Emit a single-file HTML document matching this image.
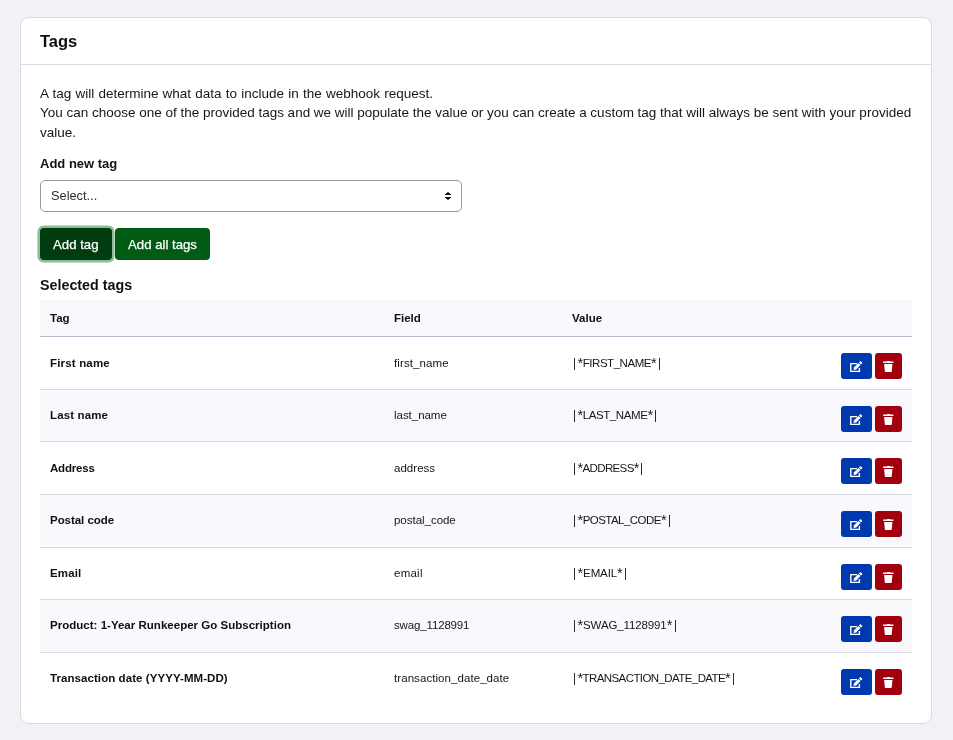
<!DOCTYPE html>
<html>
<head>
<meta charset="utf-8">
<style>
html,body{margin:0;padding:0;}
body{width:953px;height:740px;background:#f1f1f6;font-family:"Liberation Sans",sans-serif;color:#111;position:relative;overflow:hidden;}
.card{will-change:transform;position:absolute;left:20px;top:17px;width:910px;height:705px;background:#fff;border:1px solid #d9d9e3;border-radius:9px;}
.abs{position:absolute;white-space:nowrap;line-height:1;}
.hdiv{position:absolute;left:0;right:0;top:46px;height:1px;background:#d9d9e3;}
.title{left:19px;top:15px;font-size:16.5px;font-weight:bold;color:#0d0d0d;}
.p{left:19px;font-size:13.5px;color:#161616;}
.lbl{left:19px;font-size:13px;font-weight:bold;color:#111;}
.select{position:absolute;left:19px;top:162px;width:420px;height:30px;border:1px solid #9696a3;border-radius:5px;background:#fff;}
.select .t{position:absolute;left:10px;top:9px;font-size:12.8px;line-height:1;color:#2e2e2e;}
.btn{position:absolute;top:210px;height:32px;border-radius:4px;color:#fff;font-size:13.2px;}
.btn .t{position:absolute;top:10px;line-height:1;white-space:nowrap;-webkit-text-stroke:0.25px #fff;}
.b1{left:19px;width:72px;background:#003c10;box-shadow:0 0 0 2.6px #8dbd97;}
.b2{left:94px;width:95px;background:#005c14;}
.table{position:absolute;left:19px;top:282px;width:872px;}
.thead{position:absolute;left:0;top:0;width:872px;height:36px;background:#f9f9fd;border-bottom:1px solid #b9b9cb;}
.row{position:absolute;left:0;width:872px;}
.row.even{background:#f9f9fd;}
.row .bd{position:absolute;left:0;right:0;bottom:0;height:1px;background:#d9d9e3;}
.th{position:absolute;top:13px;font-size:11.5px;font-weight:bold;line-height:1;color:#0f0f0f;}
.td{position:absolute;font-size:11.5px;line-height:1;white-space:nowrap;color:#161616;}
.td.b{font-weight:bold;color:#0f0f0f;}
.pl,.pr{display:inline-block;width:1px;height:12px;background:#2a2a2a;vertical-align:-3px;letter-spacing:0;}
.pl{margin-left:2px;margin-right:2.5px;}
.pr{margin-left:2.5px;}
.st{font-size:14.5px;line-height:0;vertical-align:-0.5px;}
.ib{position:absolute;height:26px;border-radius:3px;}
.ib svg{position:absolute;}
.edit{background:#0038b0;width:31px;}
.del{background:#a3000f;width:27px;}
</style>
</head>
<body>
<div class="card">
  <div class="abs title">Tags</div>
  <div class="hdiv"></div>
  <div class="abs p" style="top:69px;word-spacing:0.45px">A tag will determine what data to include in the webhook request.</div>
  <div class="abs p" style="top:87.5px;word-spacing:-0.04px">You can choose one of the provided tags and we will populate the value or you can create a custom tag that will always be sent with your provided</div>
  <div class="abs p" style="top:108px">value.</div>
  <div class="abs lbl" style="top:139px">Add new tag</div>
  <div class="select"><div class="t">Select...</div>
    <svg style="position:absolute;left:403px;top:9px" width="8" height="12" viewBox="0 0 8 12"><path d="M4 1.9 L7 4.5 V5 H1 V4.5 Z M1 7 H7 V7.5 L4 10.1 L1 7.5 Z" fill="#111"/></svg>
  </div>
  <div class="btn b1"><span class="t" style="left:13px">Add tag</span></div>
  <div class="btn b2"><span class="t" style="left:13px">Add all tags</span></div>
  <div class="abs lbl" style="top:260px;font-size:14.3px">Selected tags</div>
  <div class="table">
    <div class="thead">
      <div class="th" style="left:10px">Tag</div>
      <div class="th" style="left:354px">Field</div>
      <div class="th" style="left:532px">Value</div>
    </div>
    <div class="row" style="top:37px;height:53px"><div class="bd"></div><div class="td b" style="left:10px;top:21px;letter-spacing:0.174px">First name</div><div class="td" style="left:354px;top:21px;letter-spacing:0.102px">first_name</div><div class="td" style="left:532px;top:21px;letter-spacing:-0.450px"><span class="pl"></span><span class="st">*</span>FIRST_NAME<span class="st">*</span><span class="pr"></span></div><div class="ib edit" style="left:801px;top:16px"><svg style="left:0;top:0" width="31" height="26" viewBox="0 0 31 26"><path d="M16 10.6 H9.8 V18.4 H18.4 V15" fill="none" stroke="#fff" stroke-width="1.4"/><path d="M12.45 17.05 L13.09 14.29 L17.40 9.98 L19.52 12.10 L15.21 16.41 Z" fill="#fff"/><path d="M17.93 9.52 L19.41 8.03 L21.47 10.09 L19.98 11.57 Z" fill="#fff"/></svg></div><div class="ib del" style="left:835px;top:16px"><svg style="left:0;top:0" width="27" height="26" viewBox="0 0 27 26"><path d="M8.2 8.6 H11.8 L12.3 8 H14.8 L15.3 8.6 H18.4 V10.1 H8.2 Z" fill="#fff"/><path d="M9.1 11 H17.4 L16.8 18.3 Q16.7 19.0 15.9 19.0 H10.7 Q9.9 19.0 9.8 18.3 Z" fill="#fff"/></svg></div></div>
    <div class="row even" style="top:90px;height:52px"><div class="bd"></div><div class="td b" style="left:10px;top:20px;letter-spacing:0.142px">Last name</div><div class="td" style="left:354px;top:20px;letter-spacing:-0.031px">last_name</div><div class="td" style="left:532px;top:20px;letter-spacing:-0.412px"><span class="pl"></span><span class="st">*</span>LAST_NAME<span class="st">*</span><span class="pr"></span></div><div class="ib edit" style="left:801px;top:16px"><svg style="left:0;top:0" width="31" height="26" viewBox="0 0 31 26"><path d="M16 10.6 H9.8 V18.4 H18.4 V15" fill="none" stroke="#fff" stroke-width="1.4"/><path d="M12.45 17.05 L13.09 14.29 L17.40 9.98 L19.52 12.10 L15.21 16.41 Z" fill="#fff"/><path d="M17.93 9.52 L19.41 8.03 L21.47 10.09 L19.98 11.57 Z" fill="#fff"/></svg></div><div class="ib del" style="left:835px;top:16px"><svg style="left:0;top:0" width="27" height="26" viewBox="0 0 27 26"><path d="M8.2 8.6 H11.8 L12.3 8 H14.8 L15.3 8.6 H18.4 V10.1 H8.2 Z" fill="#fff"/><path d="M9.1 11 H17.4 L16.8 18.3 Q16.7 19.0 15.9 19.0 H10.7 Q9.9 19.0 9.8 18.3 Z" fill="#fff"/></svg></div></div>
    <div class="row" style="top:142px;height:53px"><div class="bd"></div><div class="td b" style="left:10px;top:21px;letter-spacing:-0.183px">Address</div><div class="td" style="left:354px;top:21px;letter-spacing:0.029px">address</div><div class="td" style="left:532px;top:21px;letter-spacing:-0.632px"><span class="pl"></span><span class="st">*</span>ADDRESS<span class="st">*</span><span class="pr"></span></div><div class="ib edit" style="left:801px;top:16px"><svg style="left:0;top:0" width="31" height="26" viewBox="0 0 31 26"><path d="M16 10.6 H9.8 V18.4 H18.4 V15" fill="none" stroke="#fff" stroke-width="1.4"/><path d="M12.45 17.05 L13.09 14.29 L17.40 9.98 L19.52 12.10 L15.21 16.41 Z" fill="#fff"/><path d="M17.93 9.52 L19.41 8.03 L21.47 10.09 L19.98 11.57 Z" fill="#fff"/></svg></div><div class="ib del" style="left:835px;top:16px"><svg style="left:0;top:0" width="27" height="26" viewBox="0 0 27 26"><path d="M8.2 8.6 H11.8 L12.3 8 H14.8 L15.3 8.6 H18.4 V10.1 H8.2 Z" fill="#fff"/><path d="M9.1 11 H17.4 L16.8 18.3 Q16.7 19.0 15.9 19.0 H10.7 Q9.9 19.0 9.8 18.3 Z" fill="#fff"/></svg></div></div>
    <div class="row even" style="top:195px;height:53px"><div class="bd"></div><div class="td b" style="left:10px;top:20px;letter-spacing:-0.045px">Postal code</div><div class="td" style="left:354px;top:20px;letter-spacing:-0.025px">postal_code</div><div class="td" style="left:532px;top:20px;letter-spacing:-0.530px"><span class="pl"></span><span class="st">*</span>POSTAL_CODE<span class="st">*</span><span class="pr"></span></div><div class="ib edit" style="left:801px;top:16px"><svg style="left:0;top:0" width="31" height="26" viewBox="0 0 31 26"><path d="M16 10.6 H9.8 V18.4 H18.4 V15" fill="none" stroke="#fff" stroke-width="1.4"/><path d="M12.45 17.05 L13.09 14.29 L17.40 9.98 L19.52 12.10 L15.21 16.41 Z" fill="#fff"/><path d="M17.93 9.52 L19.41 8.03 L21.47 10.09 L19.98 11.57 Z" fill="#fff"/></svg></div><div class="ib del" style="left:835px;top:16px"><svg style="left:0;top:0" width="27" height="26" viewBox="0 0 27 26"><path d="M8.2 8.6 H11.8 L12.3 8 H14.8 L15.3 8.6 H18.4 V10.1 H8.2 Z" fill="#fff"/><path d="M9.1 11 H17.4 L16.8 18.3 Q16.7 19.0 15.9 19.0 H10.7 Q9.9 19.0 9.8 18.3 Z" fill="#fff"/></svg></div></div>
    <div class="row" style="top:248px;height:52px"><div class="bd"></div><div class="td b" style="left:10px;top:20px;letter-spacing:0.148px">Email</div><div class="td" style="left:354px;top:20px;letter-spacing:0.240px">email</div><div class="td" style="left:532px;top:20px;letter-spacing:-0.094px"><span class="pl"></span><span class="st">*</span>EMAIL<span class="st">*</span><span class="pr"></span></div><div class="ib edit" style="left:801px;top:16px"><svg style="left:0;top:0" width="31" height="26" viewBox="0 0 31 26"><path d="M16 10.6 H9.8 V18.4 H18.4 V15" fill="none" stroke="#fff" stroke-width="1.4"/><path d="M12.45 17.05 L13.09 14.29 L17.40 9.98 L19.52 12.10 L15.21 16.41 Z" fill="#fff"/><path d="M17.93 9.52 L19.41 8.03 L21.47 10.09 L19.98 11.57 Z" fill="#fff"/></svg></div><div class="ib del" style="left:835px;top:16px"><svg style="left:0;top:0" width="27" height="26" viewBox="0 0 27 26"><path d="M8.2 8.6 H11.8 L12.3 8 H14.8 L15.3 8.6 H18.4 V10.1 H8.2 Z" fill="#fff"/><path d="M9.1 11 H17.4 L16.8 18.3 Q16.7 19.0 15.9 19.0 H10.7 Q9.9 19.0 9.8 18.3 Z" fill="#fff"/></svg></div></div>
    <div class="row even" style="top:300px;height:53px"><div class="bd"></div><div class="td b" style="left:10px;top:20px;letter-spacing:0.018px">Product: 1-Year Runkeeper Go Subscription</div><div class="td" style="left:354px;top:20px;letter-spacing:-0.150px">swag_1128991</div><div class="td" style="left:532px;top:20px;letter-spacing:-0.119px"><span class="pl"></span><span class="st">*</span>SWAG_1128991<span class="st">*</span><span class="pr"></span></div><div class="ib edit" style="left:801px;top:16px"><svg style="left:0;top:0" width="31" height="26" viewBox="0 0 31 26"><path d="M16 10.6 H9.8 V18.4 H18.4 V15" fill="none" stroke="#fff" stroke-width="1.4"/><path d="M12.45 17.05 L13.09 14.29 L17.40 9.98 L19.52 12.10 L15.21 16.41 Z" fill="#fff"/><path d="M17.93 9.52 L19.41 8.03 L21.47 10.09 L19.98 11.57 Z" fill="#fff"/></svg></div><div class="ib del" style="left:835px;top:16px"><svg style="left:0;top:0" width="27" height="26" viewBox="0 0 27 26"><path d="M8.2 8.6 H11.8 L12.3 8 H14.8 L15.3 8.6 H18.4 V10.1 H8.2 Z" fill="#fff"/><path d="M9.1 11 H17.4 L16.8 18.3 Q16.7 19.0 15.9 19.0 H10.7 Q9.9 19.0 9.8 18.3 Z" fill="#fff"/></svg></div></div>
    <div class="row" style="top:353px;height:52px"><div class="td b" style="left:10px;top:20px;letter-spacing:0.070px">Transaction date (YYYY-MM-DD)</div><div class="td" style="left:354px;top:20px;letter-spacing:0.070px">transaction_date_date</div><div class="td" style="left:532px;top:20px;letter-spacing:-0.586px"><span class="pl"></span><span class="st">*</span>TRANSACTION_DATE_DATE<span class="st">*</span><span class="pr"></span></div><div class="ib edit" style="left:801px;top:16px"><svg style="left:0;top:0" width="31" height="26" viewBox="0 0 31 26"><path d="M16 10.6 H9.8 V18.4 H18.4 V15" fill="none" stroke="#fff" stroke-width="1.4"/><path d="M12.45 17.05 L13.09 14.29 L17.40 9.98 L19.52 12.10 L15.21 16.41 Z" fill="#fff"/><path d="M17.93 9.52 L19.41 8.03 L21.47 10.09 L19.98 11.57 Z" fill="#fff"/></svg></div><div class="ib del" style="left:835px;top:16px"><svg style="left:0;top:0" width="27" height="26" viewBox="0 0 27 26"><path d="M8.2 8.6 H11.8 L12.3 8 H14.8 L15.3 8.6 H18.4 V10.1 H8.2 Z" fill="#fff"/><path d="M9.1 11 H17.4 L16.8 18.3 Q16.7 19.0 15.9 19.0 H10.7 Q9.9 19.0 9.8 18.3 Z" fill="#fff"/></svg></div></div>
  </div>
</div>
</body>
</html>
